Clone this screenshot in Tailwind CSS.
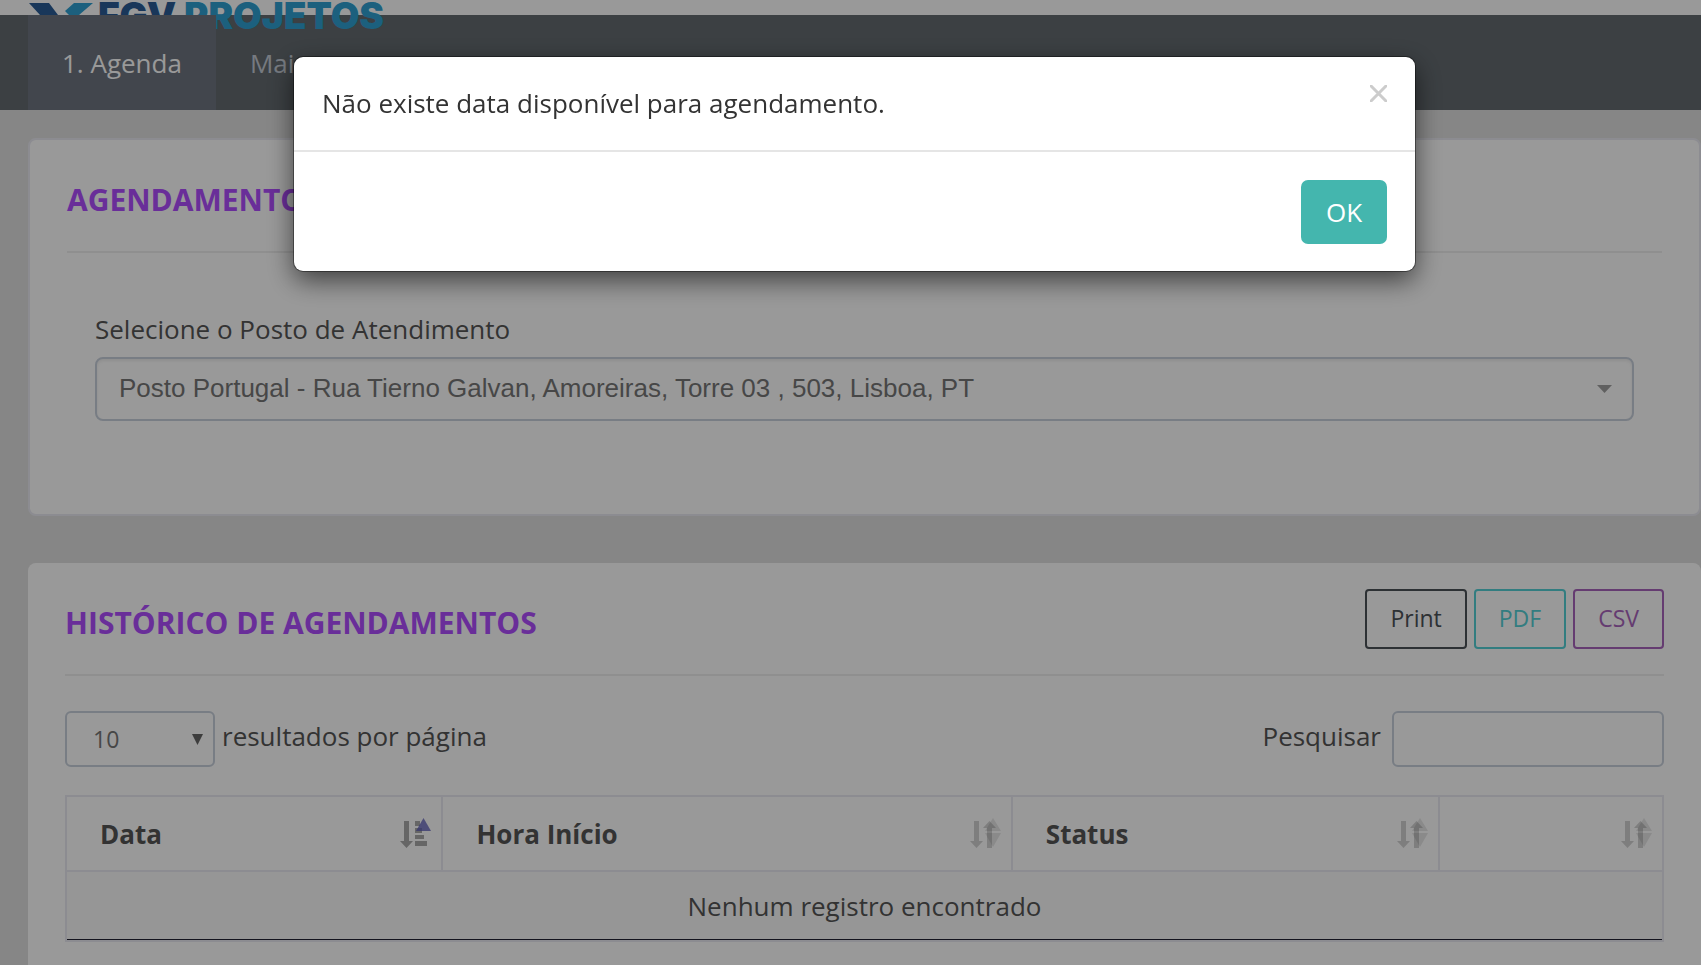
<!DOCTYPE html>
<html lang="pt-BR">
<head>
<meta charset="utf-8">
<meta name="viewport" content="width=device-width, initial-scale=1">
<title>Agenda</title>
<script src="https://cdn.jsdelivr.net/npm/@tailwindcss/browser@4"></script>
</head>
<body class="bg-[#e0e0e0] font-['Open_Sans',sans-serif] text-[26px] leading-9 text-[#555555]">
<svg class="hidden" aria-hidden="true">
  <symbol id="sort-both" viewBox="0 0 32 32">
    <g fill="#333">
      <path opacity=".22" d="M5 3h5v20h4l-6.500 7L1 23h4z"/>
      <path opacity=".22" d="M18 30V10h-4l6.500-7L27 10h-4v20z"/>
      <path opacity=".12" d="M24 0l8 13H16zM16 15h16l-8 14z"/>
    </g>
  </symbol>
  <symbol id="sort-asc" viewBox="0 0 32 32">
    <path fill="#aaa" d="M5 3h5v20h4l-6.500 7L1 23h4zM16 3h5v5h-5zM16 10h7v5h-7zM16 17h9v4h-9zM16 23h12v5H16z"/>
    <path fill="#5a5ab8" opacity=".75" d="M24.500 0L32 13H17z"/>
  </symbol>
</svg>
<div class="flex h-screen flex-col overflow-hidden">
  <header class="relative">
    <div class="h-[15px] bg-white"></div>
    <a href="#" aria-label="FGV Projetos" class="absolute top-0 left-7 flex items-start font-['Inter',sans-serif] text-[37px] leading-8 font-black whitespace-nowrap">
      <svg class="h-8 w-[70px]" viewBox="0 0 70 32" aria-hidden="true"><path fill="#2a5c96" d="M1 3h20l18 24H23z"/><path fill="#2fa0d2" d="M46 3h19L51 15l-5 5-9-9z"/></svg>
      <span class="text-[#2a5c96]">FGV</span><span class="ml-2 text-[#2fa0d2]">PROJETOS</span>
    </a>
    <nav class="flex h-[95px] bg-[#646b70] pl-7">
      <a href="#" class="relative flex items-center bg-[#6e7580] px-[34px] text-white">1. Agenda</a>
      <a href="#" class="flex items-center px-[34px] text-[#c5ccd6]">Mais</a>
    </nav>
  </header>
  <main class="flex flex-1 flex-col gap-[47px] pt-7 pl-7">
    <section class="shrink-0 rounded-lg border-2 border-[#eaeaf2] bg-white px-[37px] pb-[93px]">
      <h2 class="border-b-2 border-[#eeeeee] pt-[42px] pb-[33px] text-[30px] font-bold text-[#b04dff]">AGENDAMENTO</h2>
      <div class="px-7 pt-[58px]">
        <label for="posto" class="block pb-[10px]">Selecione o Posto de Atendimento</label>
        <div class="relative">
          <select id="posto" class="h-16 w-full appearance-none rounded-lg border-2 border-[#c8d0dc] bg-white pb-[2px] pl-[22px] font-['Liberation_Sans',sans-serif] text-[26px] text-[#777777] shadow-[inset_0_2px_3px_rgba(0,0,0,0.07)]"><option>Posto Portugal - Rua Tierno Galvan, Amoreiras, Torre 03 , 503, Lisboa, PT</option></select>
          <svg class="pointer-events-none absolute top-7 right-[22px] h-2 w-[15px]" viewBox="0 0 15 8" fill="#a0a0a0" aria-hidden="true"><path d="M0 0h15L7.500 8z"/></svg>
        </div>
      </div>
    </section>
    <section class="flex-1 rounded-t-lg bg-white px-[37px]">
      <div class="flex items-start justify-between border-b-2 border-[#eeeeee] pt-[26px] pb-[25px]">
        <h2 class="pt-4 text-[30px] font-bold text-[#b04dff]">HISTÓRICO DE AGENDAMENTOS</h2>
        <div class="flex gap-[7px] text-[23px]">
          <button class="h-[60px] rounded border-2 border-[#4c5258] px-[23px] pb-[2px] text-[#4c5258]">Print</button>
          <button class="h-[60px] rounded border-2 border-[#54d0d6] px-[23px] pb-[2px] text-[#54d0d6]">PDF</button>
          <button class="h-[60px] rounded border-2 border-[#a864bc] px-[23px] pb-[2px] text-[#a864bc]">CSV</button>
        </div>
      </div>
      <div class="flex items-start justify-between pt-[35px]">
        <div class="flex items-start gap-[7px]">
          <div class="relative">
            <select id="len" class="h-14 w-[150px] appearance-none rounded-md border-2 border-[#c8d0dc] bg-white pl-[26px] text-[23px] text-[#777777]"><option>10</option></select>
            <svg class="pointer-events-none absolute top-[23px] right-3 h-[11px] w-[11px]" viewBox="0 0 11 11" fill="#666" aria-hidden="true"><path d="M0 0h11L5.500 11z"/></svg>
          </div>
          <label for="len" class="pt-[7px]">resultados por página</label>
        </div>
        <div class="flex items-start gap-[11px]">
          <label for="busca" class="pt-[7px]">Pesquisar</label>
          <input id="busca" type="text" class="h-14 w-[272px] rounded-md border-2 border-[#c8d0dc] bg-white px-4">
        </div>
      </div>
      <table class="mt-7 w-full table-fixed border-separate border-spacing-0 border-2 border-[#eaeaf2]">
        <colgroup><col class="w-[23.6%]"><col class="w-[35.7%]"><col class="w-[26.8%]"><col></colgroup>
        <thead>
          <tr class="h-[75px] text-left">
            <th class="border-r-2 border-b-2 border-[#eaeaf2] pr-[10px] pl-[33px] font-bold"><div class="flex items-center justify-between">Data<svg class="size-8" aria-hidden="true"><use href="#sort-asc"/></svg></div></th>
            <th class="border-r-2 border-b-2 border-[#eaeaf2] pr-[10px] pl-[33px] font-bold"><div class="flex items-center justify-between">Hora Início<svg class="size-8" aria-hidden="true"><use href="#sort-both"/></svg></div></th>
            <th class="border-r-2 border-b-2 border-[#eaeaf2] pr-[10px] pl-[33px] font-bold"><div class="flex items-center justify-between">Status<svg class="size-8" aria-hidden="true"><use href="#sort-both"/></svg></div></th>
            <th class="border-b-2 border-[#eaeaf2] pr-[10px] pl-[33px]"><div class="flex items-center justify-end"><svg class="size-8" aria-hidden="true"><use href="#sort-both"/></svg></div></th>
          </tr>
        </thead>
        <tbody>
          <tr class="h-[68px]"><td colspan="4" class="border-b border-[#222233] bg-[#fbfbfb] text-center">Nenhum registro encontrado</td></tr>
        </tbody>
      </table>
    </section>
  </main>
</div>
<div class="fixed inset-0 flex items-start justify-center bg-black/40 px-8 pt-[57px]">
  <div role="dialog" aria-modal="true" aria-labelledby="msg" class="ml-2 w-full max-w-[1121px] rounded-[9px] bg-white text-[#333333] shadow-[0_0_0_1px_rgba(0,0,0,0.4),0_9px_27px_rgba(0,0,0,0.6)]">
    <div class="flex items-start justify-between border-b-2 border-[#e5e5e5] px-7 pt-7 pb-[29px]">
      <p id="msg">Não existe data disponível para agendamento.</p>
      <button aria-label="Fechar"><svg class="block size-[17px]" viewBox="0 0 17 17" stroke="#cccccc" stroke-width="3" aria-hidden="true"><path d="M0 0l17 17M17 0L0 17"/></svg></button>
    </div>
    <div class="flex justify-end px-7 pt-7 pb-[27px]">
      <button class="h-16 w-[86px] rounded-[7px] bg-[#44b6ae] text-white">OK</button>
    </div>
  </div>
</div>
</body>
</html>
